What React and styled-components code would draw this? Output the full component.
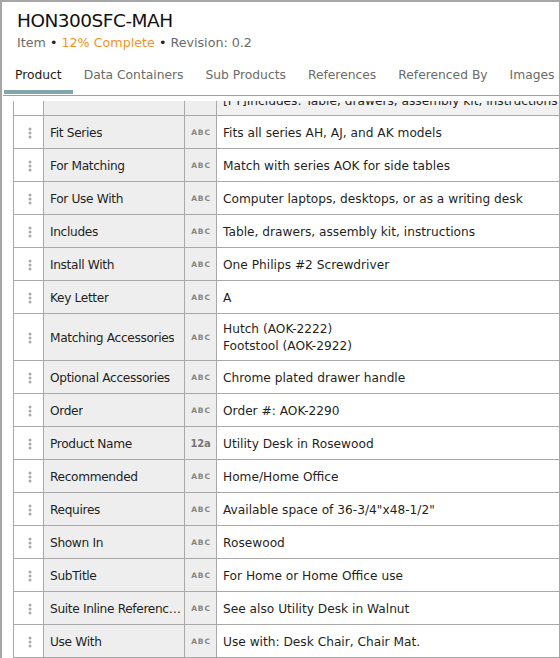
import React from "react";
import styled, { createGlobalStyle } from "styled-components";

const Global = createGlobalStyle`
  html, body { margin: 0; padding: 0; background: #fff; overflow: hidden; }
  body { font-family: "DejaVu Sans", "Liberation Sans", sans-serif; }
  * { box-sizing: border-box; }
`;

const Frame = styled.div`
  width: 560px;
  height: 658px;
  border-top: 2px solid #a6a6a6;
  border-left: 2px solid #a6a6a6;
  border-right: 1px solid #a6a6a6;
  display: flex;
  flex-direction: column;
  overflow: hidden;
  background: #fff;
`;

const Header = styled.div`
  padding: 6px 0 0 15px;
`;

const Title = styled.div`
  font-size: 18.5px;
  letter-spacing: -0.5px;
  line-height: 26px;
  color: #111;
`;

const Meta = styled.div`
  font-size: 12.7px;
  line-height: 18px;
  color: #6a6a6a;
  white-space: nowrap;
`;

const Dot = styled.span`
  color: #222;
`;

const Progress = styled.span`
  color: #f39324;
`;

const TabBar = styled.div`
  display: flex;
  margin-left: 1px;
  padding-left: 1px;
  padding-bottom: 1px;
  border-bottom: 1px solid #86a8ae;
  white-space: nowrap;
  overflow: hidden;
  flex-shrink: 0;
`;

const Tab = styled.div`
  padding: 14px 11px 6px;
  font-size: 12.3px;
  line-height: 18px;
  color: ${(p) => (p.$active ? "#1c1c1c" : "#6b6b6b")};
  border-bottom: 4px solid ${(p) => (p.$active ? "#80a5ac" : "transparent")};
  flex-shrink: 0;
`;

const Viewport = styled.div`
  flex: 1;
  margin-top: 5px;
  margin-left: 11px;
  overflow: hidden;
`;

const Table = styled.div`
  margin-top: -32px;
  border-left: 1px solid #a9a9a9;
`;

const Row = styled.div`
  display: grid;
  grid-template-columns: 30px 141px 32px 1fr;
  border-bottom: 1px solid #a9a9a9;
  font-size: 12.2px;
  line-height: 17px;
  color: #1f1f1f;
`;

const Cell = styled.div`
  min-height: 32px;
  display: flex;
  align-items: center;
  border-right: 1px solid #a9a9a9;
  overflow: hidden;
  padding-top: 2px;
`;

const GripCell = styled(Cell)`
  justify-content: center;
  padding-left: 3px;
  background: #fff;
`;

const NameCell = styled(Cell)`
  padding-left: 6px;
  padding-right: 3px;
  background: #eeeeee;
`;

const NameText = styled.span`
  white-space: nowrap;
  overflow: hidden;
  text-overflow: ellipsis;
  letter-spacing: -0.35px;
`;

const TypeCell = styled(Cell)`
  justify-content: center;
  background: #eeeeee;
`;

const ValueCell = styled(Cell)`
  border-right: none;
  padding: 7px 6px 5px;
  background: ${(p) => (p.$shade ? "#f1f1f1" : "#fff")};
`;

const ValueText = styled.div`
  white-space: nowrap;
`;

const TypeLabel = styled.span`
  font-size: ${(p) => (p.$num ? "10px" : "7.5px")};
  font-weight: bold;
  letter-spacing: ${(p) => (p.$num ? "-0.3px" : "0.9px")};
  color: ${(p) => (p.$num ? "#767676" : "#858585")};
  line-height: 10px;
  margin-left: ${(p) => (p.$num ? "0" : "1px")};
`;

const Grip = () => (
  <svg width="4" height="12" viewBox="0 0 4 12">
    <circle cx="2" cy="2" r="1.5" fill="#a9a9a9" />
    <circle cx="2" cy="6" r="1.5" fill="#a9a9a9" />
    <circle cx="2" cy="10" r="1.5" fill="#a9a9a9" />
  </svg>
);

const tabs = [
  "Product",
  "Data Containers",
  "Sub Products",
  "References",
  "Referenced By",
  "Images & Documents",
];

const rows = [
  {
    name: "Features",
    type: "ABC",
    value: [
      "Keyboard tray, cable management",
      "[FT]Includes: Table, drawers, assembly kit, instructions",
    ],
    shade: true,
  },
  { name: "Fit Series", type: "ABC", value: ["Fits all series AH, AJ, and AK models"] },
  { name: "For Matching", type: "ABC", value: ["Match with series AOK for side tables"] },
  { name: "For Use With", type: "ABC", value: ["Computer laptops, desktops, or as a writing desk"] },
  { name: "Includes", type: "ABC", value: ["Table, drawers, assembly kit, instructions"] },
  { name: "Install With", type: "ABC", value: ["One Philips #2 Screwdriver"] },
  { name: "Key Letter", type: "ABC", value: ["A"] },
  {
    name: "Matching Accessories",
    type: "ABC",
    value: ["Hutch (AOK-2222)", "Footstool (AOK-2922)"],
  },
  { name: "Optional Accessories", type: "ABC", value: ["Chrome plated drawer handle"] },
  { name: "Order", type: "ABC", value: ["Order #: AOK-2290"] },
  { name: "Product Name", type: "12a", value: ["Utility Desk in Rosewood"] },
  { name: "Recommended", type: "ABC", value: ["Home/Home Office"] },
  { name: "Requires", type: "ABC", value: ['Available space of 36-3/4"x48-1/2"'] },
  { name: "Shown In", type: "ABC", value: ["Rosewood"] },
  { name: "SubTitle", type: "ABC", value: ["For Home or Home Office use"] },
  { name: "Suite Inline References", type: "ABC", value: ["See also Utility Desk in Walnut"] },
  { name: "Use With", type: "ABC", value: ["Use with: Desk Chair, Chair Mat."] },
];

export default function App() {
  return (
    <>
      <Global />
      <Frame>
        <Header>
          <Title>HON300SFC-MAH</Title>
          <Meta>
            Item <Dot>•</Dot> <Progress>12% Complete</Progress> <Dot>•</Dot> Revision: 0.2
          </Meta>
        </Header>
        <TabBar>
          {tabs.map((t, i) => (
            <Tab key={t} $active={i === 0}>
              {t}
            </Tab>
          ))}
        </TabBar>
        <Viewport>
          <Table>
            {rows.map((r) => (
              <Row key={r.name}>
                <GripCell>
                  <Grip />
                </GripCell>
                <NameCell>
                  <NameText>{r.name}</NameText>
                </NameCell>
                <TypeCell>
                  <TypeLabel $num={r.type === "12a"}>{r.type}</TypeLabel>
                </TypeCell>
                <ValueCell $shade={r.shade}>
                  <div>
                    {r.value.map((v) => (
                      <ValueText key={v}>{v}</ValueText>
                    ))}
                  </div>
                </ValueCell>
              </Row>
            ))}
          </Table>
        </Viewport>
      </Frame>
    </>
  );
}
